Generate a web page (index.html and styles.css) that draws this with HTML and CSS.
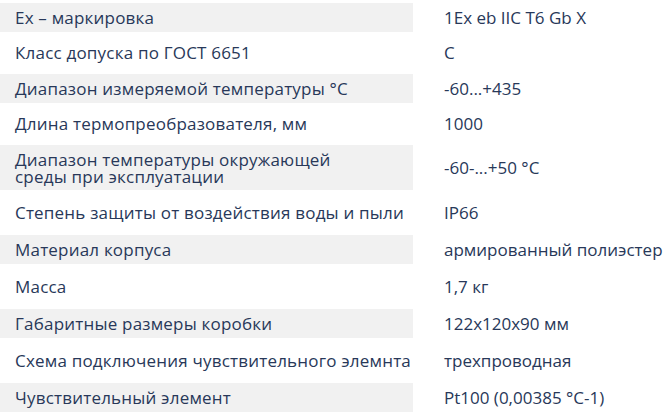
FILE: index.html
```html
<!DOCTYPE html>
<html lang="ru">
<head>
<meta charset="utf-8">
<link rel="stylesheet" href="styles.css">
</head>
<body>
<div class="specs">
  <div class="row short"><div class="name">Ex – маркировка</div><div class="value">1Ex eb IIC T6 Gb X</div></div>
  <div class="row short"><div class="name">Класс допуска по ГОСТ 6651</div><div class="value">C</div></div>
  <div class="row short"><div class="name">Диапазон измеряемой температуры °C</div><div class="value">-60...+435</div></div>
  <div class="row short"><div class="name">Длина термопреобразователя, мм</div><div class="value">1000</div></div>
  <div class="row tall"><div class="name">Диапазон температуры окружающей<br>среды при эксплуатации</div><div class="value">-60-...+50 °C</div></div>
  <div class="row"><div class="name">Степень защиты от воздействия воды и пыли</div><div class="value">IP66</div></div>
  <div class="row"><div class="name">Материал корпуса</div><div class="value">армированный полиэстер</div></div>
  <div class="row"><div class="name">Масса</div><div class="value">1,7 кг</div></div>
  <div class="row"><div class="name">Габаритные размеры коробки</div><div class="value">122x120x90 мм</div></div>
  <div class="row"><div class="name">Схема подключения чувствительного элемнта</div><div class="value">трехпроводная</div></div>
  <div class="row"><div class="name">Чувствительный элемент</div><div class="value">Pt100 (0,00385 °C-1)</div></div>
</div>
</body>
</html>
```
FILE: styles.css
```css
html, body {
  margin: 0;
  padding: 0;
  background: #ffffff;
}
body {
  font-family: "Open Sans", "Noto Sans", sans-serif;
  font-size: 17px;
  color: #283859;
}
.specs {
  display: flex;
  flex-direction: column;
  gap: 7px;
  padding-top: 3px;
}
.row {
  display: grid;
  grid-template-columns: 413px 1fr;
  height: 29px;
}
.row.short {
  height: 28.5px;
}
.row.tall {
  height: 45px;
}
.tall ~ .row {
  margin-top: 1px;
}
.row:nth-child(odd) .name {
  background: #f1f1f1;
}
.name {
  padding-left: 15px;
  display: flex;
  align-items: center;
  line-height: 17px;
  letter-spacing: 0.2px;
  white-space: nowrap;
}
.value {
  padding-left: 31px;
  display: flex;
  align-items: center;
  white-space: nowrap;
}
```
